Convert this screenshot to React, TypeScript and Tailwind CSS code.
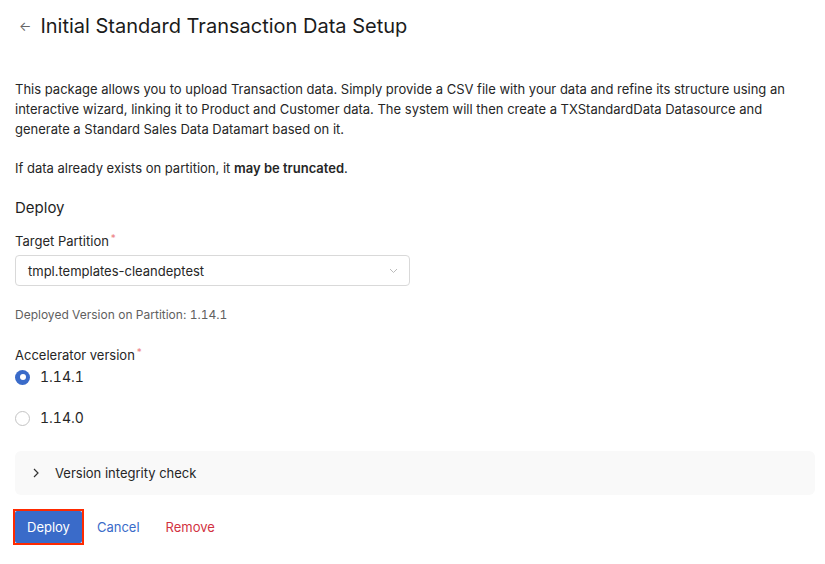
import { useState } from "react";

export default function App() {
  const [version, setVersion] = useState("1.14.1");
  const [open, setOpen] = useState(false);

  return (
    <div className="min-h-screen bg-white text-[#1f1f1f] font-['Inter',sans-serif]">
      <div className="flex items-center gap-[9px] pl-[19px] pt-[13px] h-[27px] box-content">
        <button className="text-[#666] text-[13px] leading-none">←</button>
        <h1 className="text-[20px] leading-[27px] font-normal text-[#1b1b1b]">
          Initial Standard Transaction Data Setup
        </h1>
      </div>

      <div className="px-[15px] pr-[10px] mt-[39px] text-[13px] leading-[20px] text-[#262626]">
        <p>
          This package allows you to upload Transaction data. Simply provide a CSV file with your
          data and refine its structure using an interactive wizard, linking it to Product and
          Customer data. The system will then create a TXStandardData Datasource and generate a
          Standard Sales Data Datamart based on it.
        </p>
        <p className="mt-[19px]">
          If data already exists on partition, it <b className="font-semibold">may be truncated</b>.
        </p>

        <h2 className="text-[15px] leading-[20px] mt-[20px] text-[#1f1f1f]">Deploy</h2>

        <div className="mt-[14px] flex items-start">
          <span className="text-[13px] leading-[18px]">Target Partition</span>
          <span className="text-[#e5484d] text-[10px] leading-[12px] ml-[2px] opacity-70">*</span>
        </div>
        <div className="mt-[5px] w-[395px] h-[31px] border border-[#d9d9d9] rounded-[4px] flex items-center justify-between pl-[12px] pr-[11px]">
          <span className="text-[13px]">tmpl.templates-cleandeptest</span>
          <svg width="9" height="6" viewBox="0 0 9 6" fill="none">
            <path d="M1 1l3.5 3.5L8 1" stroke="#bbb" strokeWidth="1" />
          </svg>
        </div>

        <p className="mt-[20px] text-[12px] leading-[18px] text-[#5f5f5f]">
          Deployed Version on Partition: <span className="tabular-nums">1.14.1</span>
        </p>

        <div className="mt-[22px] flex items-start">
          <span className="text-[13px] leading-[18px]">Accelerator version</span>
          <span className="text-[#e5484d] text-[10px] leading-[12px] ml-[2px] opacity-70">*</span>
        </div>

        <div className="flex flex-col pt-[2px]">
          {["1.14.1", "1.14.0"].map((v, i) => (
            <label
              key={v}
              onClick={() => setVersion(v)}
              className={`flex items-center gap-[10px] h-[22px] cursor-pointer ${i === 0 ? "mt-0" : "mt-[19px]"}`}
            >
              {version === v ? (
                <span className="w-[15px] h-[15px] rounded-full bg-[#3a6bc9] flex items-center justify-center">
                  <span className="w-[6px] h-[6px] rounded-full bg-white" />
                </span>
              ) : (
                <span className="w-[15px] h-[15px] rounded-full border border-[#c4c4c4] bg-white" />
              )}
              <span className="text-[14px] text-[#262626] tabular-nums">{v}</span>
            </label>
          ))}
        </div>

        <div className="mt-[22px] w-[800px] rounded-[6px] bg-[#f9f9f9]">
          <button
            onClick={() => setOpen(!open)}
            className="flex items-center h-[44px] pl-[17px] gap-[15px] w-full text-left"
          >
            <svg width="8" height="10" viewBox="0 0 8 10" fill="none" className={open ? "rotate-90" : ""}>
              <path d="M2 1l4 4-4 4" stroke="#333" strokeWidth="1.2" />
            </svg>
            <span className="text-[13px] text-[#262626]">Version integrity check</span>
          </button>
        </div>

        <div className="mt-[14px] flex items-center">
          <div className="-ml-[2px] border-2 border-[#ff2a00]">
            <button className="block bg-[#3a6bc9] text-white text-[13px] h-[32px] px-[12px] rounded-[2px]">
              Deploy
            </button>
          </div>
          <button className="ml-[11px] text-[#3a6bc9] text-[13px] px-[2px]">Cancel</button>
          <button className="ml-[24px] text-[#d2323f] text-[13px]">Remove</button>
        </div>
      </div>
    </div>
  );
}
